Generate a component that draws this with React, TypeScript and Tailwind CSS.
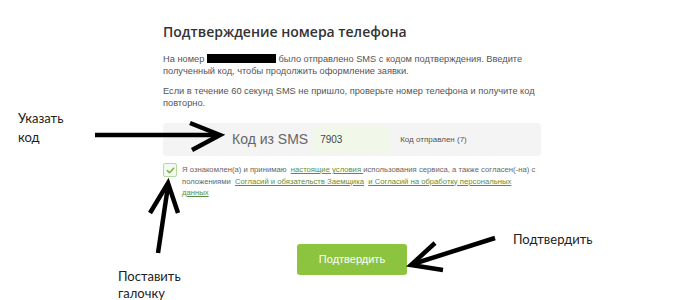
export default function App() {
  return (
    <div className="relative w-[700px] h-[300px] bg-white overflow-hidden">
      {/* form column */}
      <div className="w-[545px] pl-[163px] pt-[23px] font-['Liberation_Sans',Arial,sans-serif]">
        <h2 className="text-[14px] leading-[18px] text-[#333] font-['Open_Sans',sans-serif] font-semibold">
          Подтверждение номера телефона
        </h2>

        <div className="mt-[12px] text-[9.25px] leading-[12px] text-[#555]">
          <p>
            На номер{" "}
            <span className="inline-block w-[69px] h-[9px] bg-black align-[-1px]" />{" "}
            было отправлено SMS с кодом подтверждения. Введите
            <br />
            полученный код, чтобы продолжить оформление заявки.
          </p>
          <p className="mt-[8px]">
            Если в течение 60 секунд SMS не пришло, проверьте номер телефона и получите код
            <br />
            повторно.
          </p>
        </div>

        {/* code row */}
        <div className="mt-[14px] w-[378px] h-[33px] flex items-center rounded-[4px] bg-[#f4f4f4]">
          <span className="pl-[69px] text-[14px] text-[#666]">Код из SMS</span>
          <div className="ml-[6px] w-[75px] h-[29px] flex items-center pl-[6px] bg-[#f1f8ea] text-[10px] text-[#444]">
            7903
          </div>
          <span className="ml-[11px] text-[8px] text-[#555]">Код отправлен (7)</span>
        </div>

        {/* agreement */}
        <div className="mt-[7px] flex items-start gap-[5px]">
          <div className="w-[14px] h-[14px] shrink-0 flex items-center justify-center rounded-[2px] border border-[#b7d9a0] bg-[#f3f9ee]">
            <svg width="9" height="9" viewBox="0 0 10 10" fill="none">
              <path d="M1.5 5.2 L4 7.5 L8.5 2.5" stroke="#7db343" strokeWidth="1.8" strokeLinecap="round" strokeLinejoin="round" />
            </svg>
          </div>
          <p className="mt-[1px] whitespace-nowrap text-[7.7px] leading-[11.5px] text-[#666]">
            Я ознакомлен(а) и принимаю{"\u00a0 "}
            <span className="text-[#5f8f35] underline">настоящие условия </span>
            использования сервиса, а также согласен(-на) с
            <br />
            положениями{"\u00a0 "}
            <span className="text-[#5f8f35] underline">Согласий и обязательств Заемщика</span>
            {"\u00a0 "}
            <span className="text-[#5f8f35] underline">и Согласий на обработку персональных</span>
            <br />
            <span className="text-[#5f8f35] underline">данных</span>
          </p>
        </div>

        <div className="mt-[45px] pl-[134px]">
          <button className="w-[110px] h-[31px] rounded-[3px] bg-[#8cc43f] text-white text-[11px]">
            Подтвердить
          </button>
        </div>
      </div>

      {/* annotations */}
      <div className="absolute left-[18px] top-[109px] text-[13px] leading-[19px] text-[#222] font-['Lato',sans-serif]">
        Указать
        <br />
        код
      </div>
      <div className="absolute left-[118px] top-[268px] text-[13px] leading-[17px] text-[#222] font-['Lato',sans-serif]">
        Поставить
        <br />
        галочку
      </div>
      <div className="absolute left-[513px] top-[230px] text-[13px] leading-[19px] text-[#222] font-['Lato',sans-serif]">
        Подтвердить
      </div>

      <svg className="absolute inset-0 pointer-events-none" width="700" height="300" viewBox="0 0 700 300" fill="none">
        <g stroke="#000" strokeWidth="4.5" strokeLinejoin="miter">
          <path d="M95 135 L218 135" />
          <path d="M190 123 L220 135 L192 150" />
          <path d="M158 253 L168 186" />
          <path d="M150 213 L168 183 L178 213" />
          <path d="M495 238 L413 264" />
          <path d="M435 243 L411 265 L443 270" />
        </g>
      </svg>
    </div>
  );
}
